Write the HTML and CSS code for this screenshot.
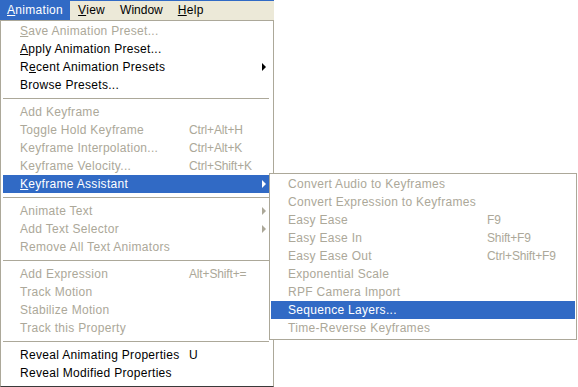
FILE: index.html
```html
<!DOCTYPE html>
<html>
<head>
<meta charset="utf-8">
<link rel="stylesheet" href="styles.css">
</head>
<body>
<div class="app">
  <div class="menubar">
    <span class="mb-item active"><u>A</u>nimation</span>
    <span class="mb-item"><u>V</u>iew</span>
    <span class="mb-item tight">Window</span>
    <span class="mb-item"><u>H</u>elp</span>
  </div>
  <div class="menu main">
    <div class="item off"><span class="label"><u>S</u>ave Animation Preset...</span></div>
    <div class="item"><span class="label"><u>A</u>pply Animation Preset...</span></div>
    <div class="item"><span class="label">R<u>e</u>cent Animation Presets</span><span class="arrow"></span></div>
    <div class="item"><span class="label">Browse Presets...</span></div>
    <div class="sep"></div>
    <div class="item off"><span class="label">Add Keyframe</span></div>
    <div class="item off"><span class="label">Toggle Hold Keyframe</span><span class="key">Ctrl+Alt+H</span></div>
    <div class="item off"><span class="label">Keyframe Interpolation...</span><span class="key">Ctrl+Alt+K</span></div>
    <div class="item off"><span class="label">Keyframe Velocity...</span><span class="key">Ctrl+Shift+K</span></div>
    <div class="item hl"><span class="label"><u>K</u>eyframe Assistant</span><span class="arrow"></span></div>
    <div class="sep"></div>
    <div class="item off"><span class="label">Animate Text</span><span class="arrow"></span></div>
    <div class="item off"><span class="label">Add Text Selector</span><span class="arrow"></span></div>
    <div class="item off"><span class="label">Remove All Text Animators</span></div>
    <div class="sep"></div>
    <div class="item off"><span class="label">Add Expression</span><span class="key">Alt+Shift+=</span></div>
    <div class="item off"><span class="label">Track Motion</span></div>
    <div class="item off"><span class="label">Stabilize Motion</span></div>
    <div class="item off"><span class="label">Track this Property</span></div>
    <div class="sep"></div>
    <div class="item"><span class="label">Reveal Animating Properties</span><span class="key">U</span></div>
    <div class="item"><span class="label">Reveal Modified Properties</span></div>
  </div>
  <div class="menu sub">
    <div class="item off"><span class="label">Convert Audio to Keyframes</span></div>
    <div class="item off"><span class="label">Convert Expression to Keyframes</span></div>
    <div class="item off"><span class="label">Easy Ease</span><span class="key">F9</span></div>
    <div class="item off"><span class="label">Easy Ease In</span><span class="key">Shift+F9</span></div>
    <div class="item off"><span class="label">Easy Ease Out</span><span class="key">Ctrl+Shift+F9</span></div>
    <div class="item off"><span class="label">Exponential Scale</span></div>
    <div class="item off"><span class="label">RPF Camera Import</span></div>
    <div class="item hl"><span class="label">Sequence Layers...</span></div>
    <div class="item off"><span class="label">Time-Reverse Keyframes</span></div>
  </div>
</div>
</body>
</html>
```

FILE: styles.css
```css
html, body {
  margin: 0;
  padding: 0;
  background: #ffffff;
}
body {
  font-family: "Liberation Sans", Arial, sans-serif;
  font-size: 12px;
  color: #000000;
}
.app {
  position: relative;
  width: 578px;
  height: 387px;
  overflow: hidden;
}
.menubar {
  width: 274px;
  height: 19px;
  border-top: 1px solid #316ac5;
  background: #ece9d8;
  display: flex;
  gap: 1px;
}
.mb-item {
  padding: 0 7px;
  line-height: 19px;
  height: 19px;
  letter-spacing: 0.3px;
}
.mb-item.tight {
  letter-spacing: 0;
}
.mb-item.active {
  background: #316ac5;
  color: #ffffff;
  margin-top: -1px;
  height: 20px;
  line-height: 20px;
}
.menu {
  background: #ffffff;
  border: 1px solid #aca899;
  box-sizing: border-box;
}
.main {
  width: 274px;
  padding: 1px 4px 4px 2px;
  border-bottom: 1px solid #3a3a3a;
}
.sub {
  position: absolute;
  left: 269px;
  top: 173px;
  width: 308px;
  padding: 1px 1px 2px 1px;
}
.item {
  position: relative;
  display: flex;
  align-items: center;
  height: 18px;
  line-height: 18px;
  padding-left: 17px;
  white-space: nowrap;
}
.label {
  letter-spacing: 0.3px;
}
.key {
  letter-spacing: -0.15px;
}
.main .label {
  width: 169px;
  flex: none;
}
.sub .label {
  width: 199px;
  flex: none;
}
.item.off {
  color: #aca899;
}
.item.hl {
  background: #316ac5;
  color: #ffffff;
}
.arrow {
  position: absolute;
  right: 3px;
  top: 5px;
  width: 0;
  height: 0;
  border-left: 4px solid #000000;
  border-top: 4px solid transparent;
  border-bottom: 4px solid transparent;
}
.item.off .arrow {
  border-left-color: #aca899;
}
.item.hl .arrow {
  border-left-color: #ffffff;
}
.sep {
  height: 9px;
  display: flex;
  align-items: center;
}
.sep::before {
  content: "";
  display: block;
  width: 100%;
  height: 1px;
  background: #aca899;
}
u {
  text-decoration: underline;
  text-underline-offset: 1px;
}
```
